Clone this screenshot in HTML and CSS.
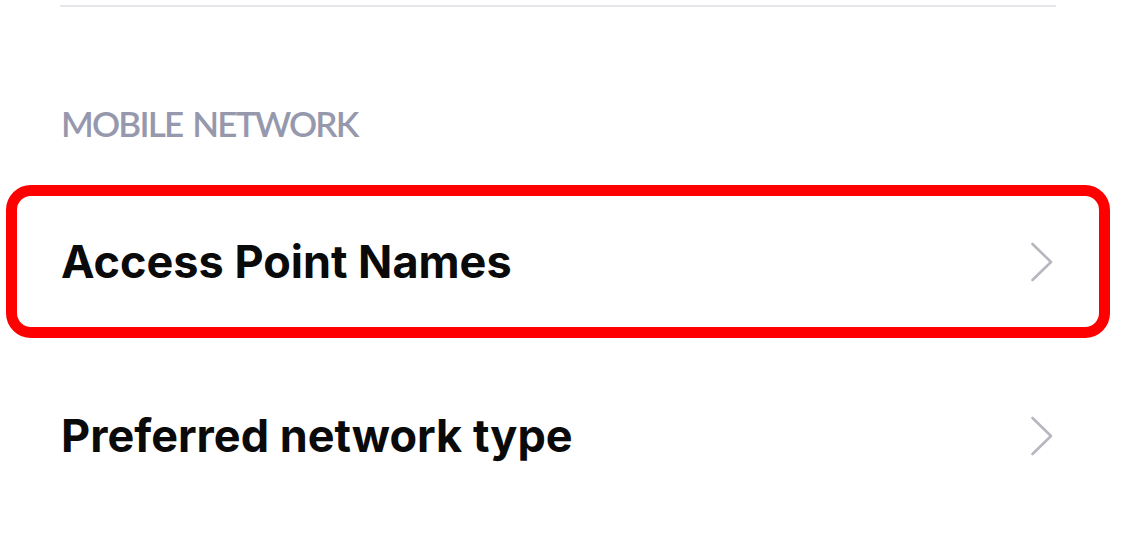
FILE: index.html
```html
<!DOCTYPE html>
<html lang="en">
<head>
<meta charset="utf-8">
<title>Mobile network</title>
<link rel="stylesheet" href="styles.css">
</head>
<body>
<div class="page">
  <div class="divider"></div>
  <div class="section-title">MOBILE NETWORK</div>
  <ul class="list">
    <li class="row row-highlight">
      <span class="row-label">Access Point Names</span>
      <svg class="chevron" width="24" height="40" viewBox="0 0 24 40" aria-hidden="true"><polyline points="2.5,2 21,20 2.5,38" fill="none" stroke="#b6b7bf" stroke-width="2.6" stroke-linecap="round" stroke-linejoin="round"/></svg>
    </li>
    <li class="row">
      <span class="row-label">Preferred network type</span>
      <svg class="chevron" width="24" height="40" viewBox="0 0 24 40" aria-hidden="true"><polyline points="2.5,2 21,20 2.5,38" fill="none" stroke="#b6b7bf" stroke-width="2.6" stroke-linecap="round" stroke-linejoin="round"/></svg>
    </li>
  </ul>
</div>
</body>
</html>
```
FILE: styles.css
```css
html, body {
  margin: 0;
  padding: 0;
  background: #ffffff;
}

.page {
  width: 1131px;
  height: 550px;
  overflow: hidden;
  font-family: Inter, Roboto, "Liberation Sans", sans-serif;
}

.divider {
  height: 2px;
  margin: 5px 75px 0 60px;
  background: #e6e6ea;
}

.section-title {
  margin: 95px 0 0 61px;
  height: 42px;
  font-family: Lato, "Noto Sans", sans-serif;
  font-size: 35px;
  line-height: 42px;
  font-weight: 600;
  color: #9699ae;
  letter-spacing: -1.8px;
  word-spacing: 3px;
}

.list {
  list-style: none;
  margin: 0;
  padding: 41px 0 0 0;
  display: flex;
  flex-direction: column;
  gap: 21px;
}

.row {
  box-sizing: border-box;
  height: 153px;
  margin: 0 21px 0 6px;
  border: 11px solid transparent;
  border-radius: 25px;
  padding: 0 45px 0 44px;
  display: flex;
  align-items: center;
  justify-content: space-between;
}

.row-highlight {
  border-color: #ff0000;
}

.row-label {
  font-size: 45px;
  font-weight: 700;
  color: #0a0a0a;
  letter-spacing: 0;
}

.chevron {
  flex: none;
  display: block;
}
```
